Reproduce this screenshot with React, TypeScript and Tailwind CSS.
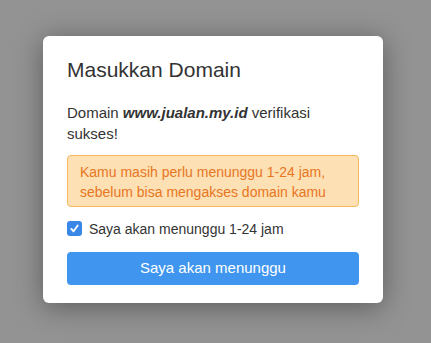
import React from "react";

export default function App() {
  return (
    <div
      className="w-[431px] h-[343px] bg-[#939393] pt-[36px] pl-[43px] overflow-hidden"
      style={{ fontFamily: '"Liberation Sans", Arial, sans-serif' }}
    >
      <div className="w-[340px] rounded-[6px] bg-white shadow-[0_4px_28px_rgba(0,0,0,0.38)] px-6 pt-[21px] pb-[18px]">
        <h2 className="text-[21px] leading-[25px] text-[#333333]">Masukkan Domain</h2>
        <p className="mt-[20px] text-[15px] leading-[21px] text-[#333333]">
          Domain <b className="italic font-bold">www.jualan.my.id</b> verifikasi sukses!
        </p>
        <div className="mt-[11px] rounded-[4px] border border-[#f6b85c] bg-[#fde0b4] px-3 pt-[6px] pb-[4px] text-[14px] leading-[20px] text-[#e8761f]">
          Kamu masih perlu menunggu 1-24 jam, sebelum bisa mengakses domain kamu
        </div>
        <label className="mt-[11px] flex h-[21px] items-center gap-[7px]">
          <span className="flex h-[15px] w-[15px] items-center justify-center rounded-[3px] bg-[#3b87e8]">
            <svg width="11" height="11" viewBox="0 0 12 12" fill="none">
              <path d="M2.5 6.5 L5 9 L9.5 2.8" stroke="white" strokeWidth="2" strokeLinecap="round" strokeLinejoin="round" />
            </svg>
          </span>
          <span className="text-[14px] leading-[20px] text-[#333333]">Saya akan menunggu 1-24 jam</span>
        </label>
        <button className="mt-[13px] flex h-[33px] w-full items-center justify-center rounded-[4px] bg-[#4096ee] text-[15px] text-white">
          Saya akan menunggu
        </button>
      </div>
    </div>
  );
}
